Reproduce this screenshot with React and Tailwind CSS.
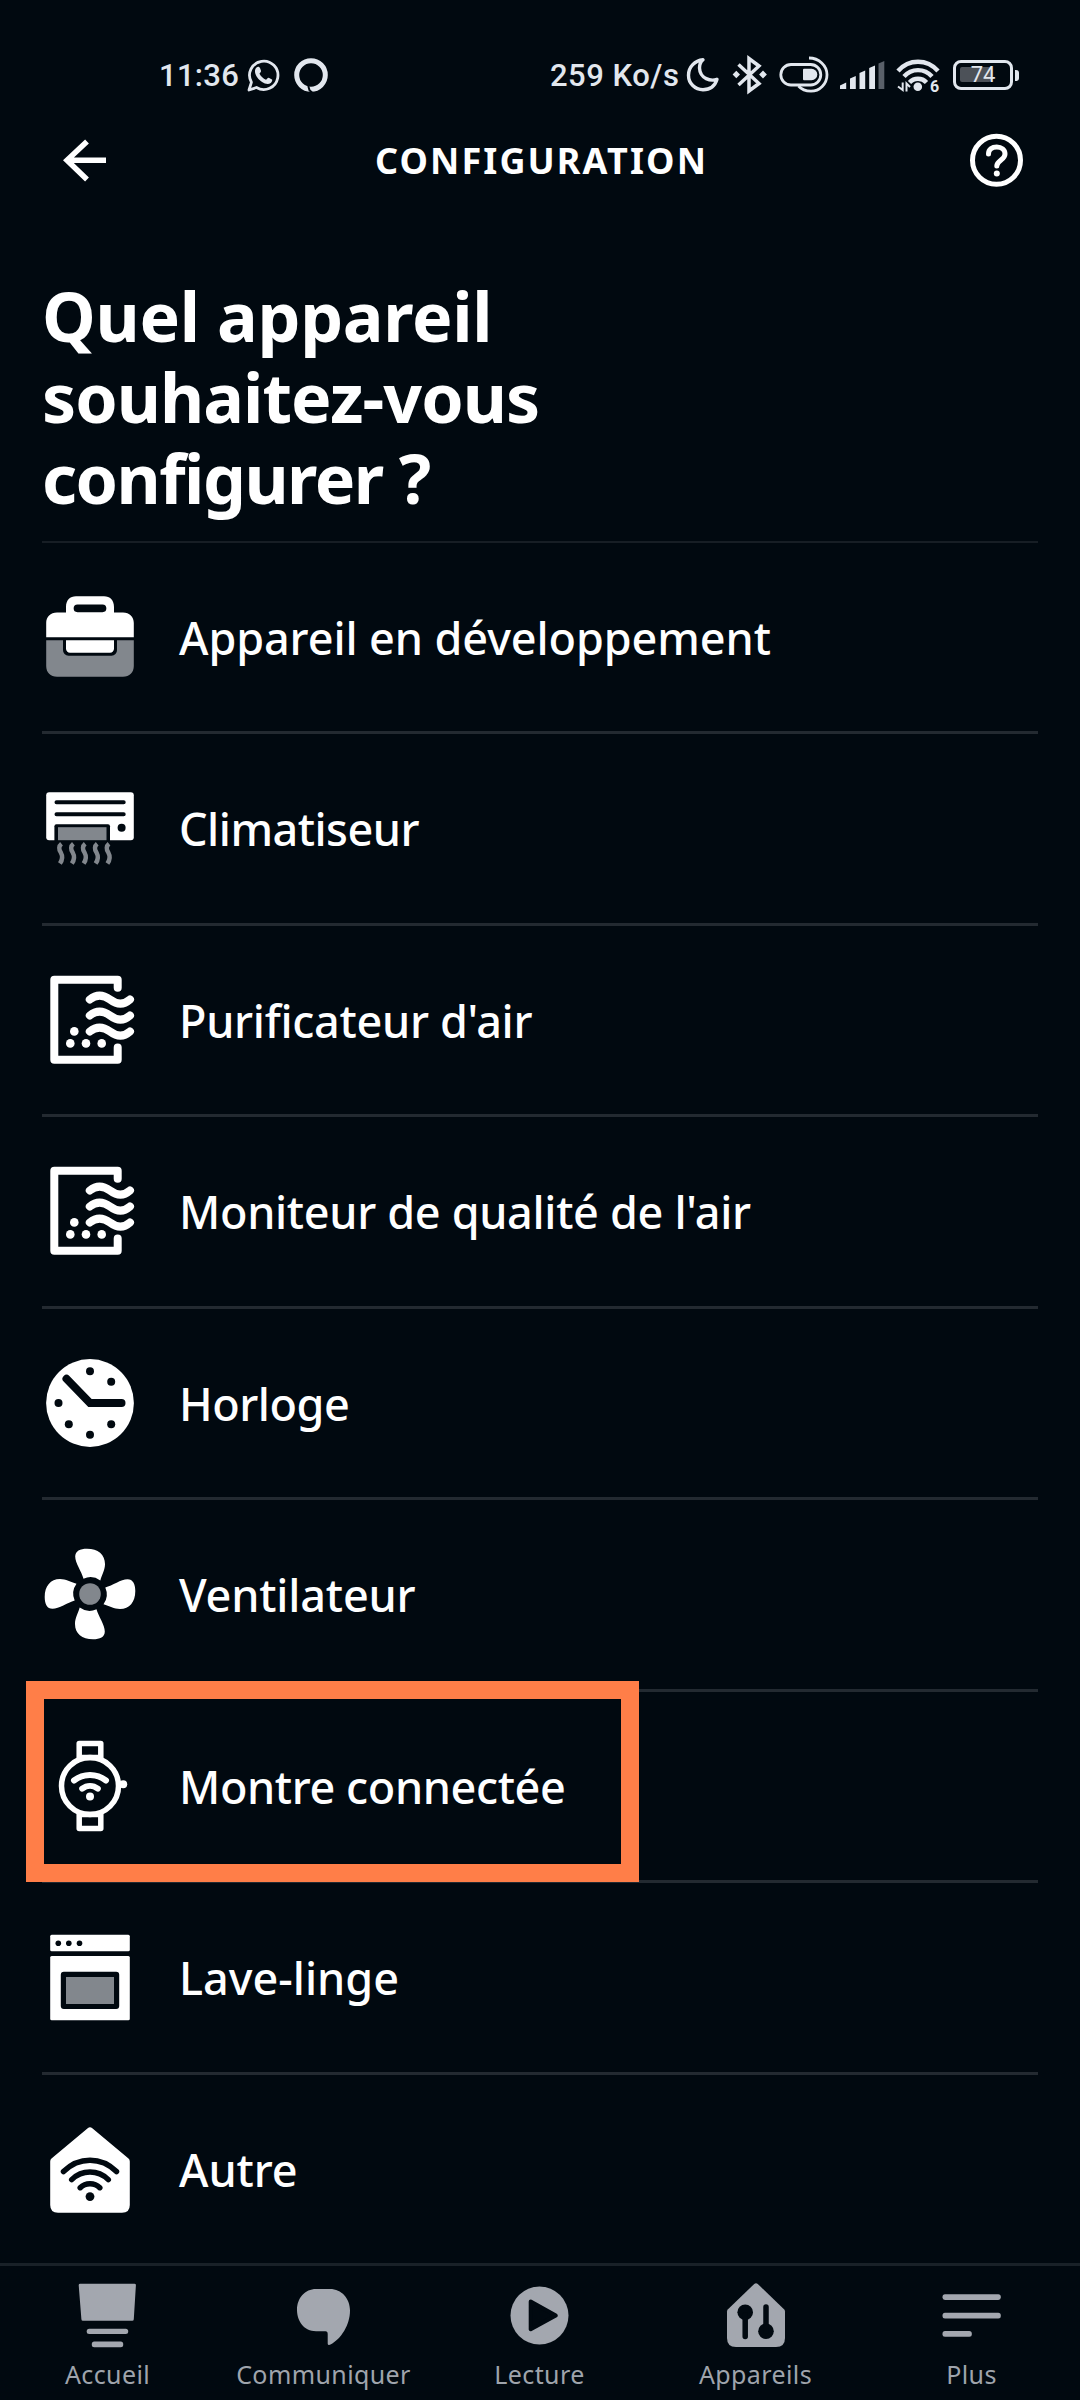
import React from "react";

const BG = "#010910";
const GRAY = "#82878d";

function RowIcon({ children }) {
  return (
    <svg className="h-24 w-24 shrink-0" viewBox="-48 -48 96 96" fill="none">
      {children}
    </svg>
  );
}

function Briefcase() {
  return (
    <RowIcon>
      <path fill="#fff" fillRule="evenodd" d="M-24-24.5V-30C-24-37-20-40.8-14-40.8H14C20-40.8 24-37 24-30V-24.5H33C39.500-24.500 43.800-20 43.800-14V.3H-43.800V-14C-43.800-20-39.500-24.500-33-24.500ZM-12.500-32.500A3.800 3.800 0 0 0-12.500-24.800H12.500A3.800 3.800 0 0 0 12.500-32.500Z" />
      <path fill={GRAY} d="M-43.800 3.200H-27V13A5.500 5.500 0 0 0-21.500 18.700H21.500A5.500 5.500 0 0 0 27 13V3.200H43.800V29C43.800 35.500 39.500 39.700 33 39.700H-33C-39.500 39.700-43.800 35.500-43.800 29Z" />
      <path fill="#fff" d="M-24 3.200H24V11.500A4 4 0 0 1 20 15.700H-20A4 4 0 0 1-24 11.500Z" />
    </RowIcon>
  );
}

function AirConditioner() {
  return (
    <RowIcon>
      <rect x="-43.8" y="-35.8" width="87.600" height="48" rx="3" fill="#fff" />
      <path stroke={BG} strokeWidth="4" strokeLinecap="round" d="M-33.500-25.800H33.700M-33.500-13.800H33.700" />
      <circle cx="31.600" cy="-.2" r="4" fill={BG} />
      <path fill={BG} d="M-35.600 13V-1.800A2 2 0 0 1-33.600-3.800H18A2 2 0 0 1 20 -1.800V13Z" />
      <rect x="-32" y="-.8" width="48.500" height="13" fill={GRAY} />
      {[-29.500, -17.600, -5.800, 6.200, 18].map((x) => (
        <path key={x} transform={`translate(${x} 0)`} stroke={GRAY} strokeWidth="4.500" d="M1 15.800C-1.800 18-1.800 21.500 .3 24.500C2 27.500 2.200 31.500 -.6 35.500" />
      ))}
    </RowIcon>
  );
}

function Purifier() {
  return (
    <RowIcon>
      <path stroke="#fff" strokeWidth="8" strokeLinecap="round" strokeLinejoin="round" d="M27.700-32.300V-40.200H-35.700V39.800H27.700V27.500" />
      {[-16, 0, 16].map((y) => (
        <path key={y} transform={`translate(0 ${y})`} stroke="#fff" strokeWidth="8" strokeLinecap="round" d="M-.2-4.500C6-9.700 13-9.700 20-4.500C27 .8 34 .8 40-4.500" />
      ))}
      <circle cx="-15.700" cy="11.400" r="4.300" fill="#fff" />
      <circle cx="-19.700" cy="23.400" r="4.300" fill="#fff" />
      <circle cx="-4" cy="23.400" r="4.300" fill="#fff" />
      <circle cx="11.700" cy="23.400" r="4.300" fill="#fff" />
    </RowIcon>
  );
}

function ClockIcon() {
  return (
    <RowIcon>
      <circle r="43.900" fill="#fff" />
      <path stroke={BG} strokeWidth="8" strokeLinecap="round" d="M-23.500-24.200L0 0H31.500" />
      {[[0, -31.800], [21.200, -21.200], [21.200, 21.200], [0, 31.800], [-21.200, 21.200], [-31.500, 0]].map(([x, y]) => (
        <circle key={`${x},${y}`} cx={x} cy={y} r="4" fill={BG} />
      ))}
    </RowIcon>
  );
}

function Fan() {
  return (
    <RowIcon>
      <circle r="10.800" fill={GRAY} />
      {[0, 90, 180, 270].map((a) => (
        <path key={a} transform={`rotate(${a})`} fill="#fff" d="M-6.500-15.300C-8.500-22.500-14.800-31-14.800-37.500C-14.800-43-10-45.300-3-45.300C8-45.300 15-39.500 15-30C15-24 12-19.500 10.300-13.500A17 17 0 0 0-6.500-15.300Z" />
      ))}
    </RowIcon>
  );
}

function Watch() {
  return (
    <RowIcon>
      <g stroke="#fff" strokeWidth="5.500" strokeLinecap="round" strokeLinejoin="round">
        <circle r="28.500" />
        <path d="M-10.800-28.500V-42.500H10.800V-28.500ZM-10.800 28.500V42.500H10.800V28.500Z" />
        <path strokeWidth="6" d="M-16-5.500C-6.500-12.800 6.500-12.800 16-5.500M-7.800 2.700C-3-1 3-1 7.800 2.700" />
      </g>
      <circle cx="0" cy="10.500" r="4" fill="#fff" />
      <circle cx="33.200" cy="-1.700" r="4" fill="#fff" />
    </RowIcon>
  );
}

function Washer() {
  return (
    <RowIcon>
      <rect x="-39.800" y="-42.200" width="79.600" height="16.500" rx="1.500" fill="#fff" />
      <rect x="-39.800" y="-21" width="79.600" height="64.200" rx="1.500" fill="#fff" />
      <circle cx="-31.700" cy="-33.800" r="2.800" fill={BG} />
      <circle cx="-21.200" cy="-33.800" r="2.800" fill={BG} />
      <circle cx="-10.500" cy="-33.800" r="2.800" fill={BG} />
      <rect x="-29.200" y="-5.200" width="58.400" height="37.200" rx="3" fill={BG} />
      <rect x="-24" y="0" width="48" height="27" fill={GRAY} />
    </RowIcon>
  );
}

function SmartHome() {
  return (
    <RowIcon>
      <path fill="#fff" d="M-2.300-40.800Q0-42.800 2.300-40.800L38.500-10.500Q39.800-9.300 39.800-7.500V36Q39.800 43.800 32 43.800H-32Q-39.800 43.800-39.800 36V-7.500Q-39.800-9.300-38.500-10.500Z" />
      <path stroke={BG} strokeWidth="5.500" strokeLinecap="round" d="M-26.500 2.500C-11-12.500 11-12.500 26.500 2.500M-18.300 10.600C-8 .5 8 .5 18.300 10.600M-9.800 18.700C-4.500 13.500 4.500 13.500 9.800 18.700" />
      <circle cy="27.600" r="4.400" fill={BG} />
    </RowIcon>
  );
}

const devices = [
  { label: "Appareil en développement", Icon: Briefcase, tracking: "tracking-[-0.1px]" },
  { label: "Climatiseur", Icon: AirConditioner, tracking: "tracking-[-0.5px]" },
  { label: "Purificateur d'air", Icon: Purifier, tracking: "tracking-[-0.3px]" },
  { label: "Moniteur de qualité de l'air", Icon: Purifier, tracking: "tracking-[-0.33px]" },
  { label: "Horloge", Icon: ClockIcon, tracking: "tracking-[-0.45px]" },
  { label: "Ventilateur", Icon: Fan, tracking: "tracking-[-0.18px]" },
  { label: "Montre connectée", Icon: Watch, tracking: "tracking-[-0.4px]", highlighted: true },
  { label: "Lave-linge", Icon: Washer, tracking: "tracking-normal" },
  { label: "Autre", Icon: SmartHome, tracking: "tracking-[-0.1px]" },
];

function StatusBar() {
  return (
    <div className="flex h-[100px] shrink-0 items-center pt-[50px] pl-[159px] font-['Roboto',sans-serif] text-[31px] leading-[50px] font-medium text-[#e2e7ee]">
      <span className="w-[86px] pt-[2px] tracking-[0.3px]">11:36</span>
      <svg className="h-[50px] w-[36px]" viewBox="245 50 36 50" fill="none">
        <path stroke="currentColor" strokeWidth="2.800" strokeLinejoin="round" d="M249 90L251.400 82.300A14.200 14.200 0 1 1 256.500 87.500Z" />
        <path fill="currentColor" d="M256.500 67.500C258 66.300 259.600 66.900 260.200 68.600L261 70.800C261.300 71.800 260 73 259.500 73.800C261 76.600 263.200 78.600 266 79.800C267 79 267.700 77.600 268.700 77.800L272 79.400C272.600 79.800 272 82 270.800 83C267 86 260.500 82 257.500 77.800C255 74.500 253.800 70 256.500 67.500Z" />
      </svg>
      <svg className="ml-[11px] h-[50px] w-[38px]" viewBox="292 50 38 50" fill="none">
        <circle cx="311" cy="75" r="14.300" stroke="currentColor" strokeWidth="5" />
        <path stroke={BG} strokeWidth="2" d="M308.300 86L309.500 90.300L312 92.500" />
      </svg>
      <span className="ml-[220px] w-[135px] pt-[2px] tracking-[0.5px] whitespace-nowrap">259 Ko/s</span>
      <svg className="h-[50px] w-[36px]" viewBox="685 50 36 50" fill="none">
        <path stroke="currentColor" strokeWidth="3.400" strokeLinejoin="round" d="M703 59.800C695 60.500 688.500 67 688.500 75.200C688.500 83.500 695 89.700 703 89.700C710 89.700 715 86 717 79.300C711 81.500 700 79 699.500 68C699.500 64.500 701 61.500 703 59.800Z" />
      </svg>
      <svg className="ml-[10px] h-[50px] w-[38px]" viewBox="731 50 38 50" fill="none">
        <path stroke="currentColor" strokeWidth="3.500" d="M738.500 64.500L759 83.500L749 91V58.500L759 66L738.500 85" />
        <path fill="currentColor" d="M732.600 74.500L736.300 70.800L740 74.500L736.300 78.200ZM759.100 74.500L763 70.600L766.900 74.500L763 78.400Z" />
      </svg>
      <svg className="ml-[8px] h-[50px] w-[54px]" viewBox="777 50 54 50" fill="none">
        <rect x="780.800" y="64.500" width="40" height="20.500" rx="10.200" stroke="currentColor" strokeWidth="2.800" />
        <path fill="currentColor" d="M804 68.700H811.500A5.700 5.700 0 0 1 811.500 80.300H804A1 1 0 0 1 803 79.300V69.700A1 1 0 0 1 804 68.700Z" />
        <path stroke="currentColor" strokeWidth="2.800" d="M809 58C819 58 827 65.500 827 74.700C827 84 819.500 91.200 811 91.200C806 91.200 801.500 89.500 798.500 86" />
      </svg>
      <svg className="ml-[8px] h-[50px] w-[47px]" viewBox="839 50 47 50" fill="none">
        <path fill="currentColor" d="M840 89V85.500L846.200 82.500V89ZM850 89V78.500L855.800 76V89ZM859.500 89V73L865.200 70.500V89ZM869.200 89V68L875 65.500V89Z" />
        <path fill="#596069" d="M878.500 89V63.500L884.300 61V89Z" />
      </svg>
      <svg className="ml-[9px] h-[50px] w-[46px]" viewBox="895 50 46 50" fill="none">
        <path stroke="currentColor" strokeWidth="4.400" d="M898 71C909 58.700 927 58.700 938 71M904 76.500C911.500 68 924.500 68 932 76.500M909.500 82.500C914 77.500 922 77.500 926.500 82.500" />
        <circle cx="917.800" cy="86.800" r="4.300" fill="currentColor" />
        <path stroke="currentColor" strokeWidth="2" d="M902.700 82.500V90L898 86.500M906.500 91.500V83.500L910 87" />
        <text x="930" y="92" fontSize="16" fontWeight="700" fill="currentColor">6</text>
      </svg>
      <div className="relative ml-[12px] flex h-[30px] w-[60px] items-center justify-center rounded-[8px] border-[3.500px] border-[#e2e7ee] text-[22px] leading-none font-normal">
        <div className="absolute top-1 left-1 h-[15px] w-[31px] rounded-[2px] bg-[#4c5158]" />
        <span className="relative">74</span>
      </div>
      <div className="ml-[2px] h-[11px] w-[4px] rounded-r-[3px] bg-[#e2e7ee]" />
    </div>
  );
}

function Header() {
  return (
    <header className="flex h-[120px] shrink-0 items-center justify-between pr-[53px] pl-[60px]">
      <svg className="h-[50px] w-[50px]" viewBox="60 135 50 50" fill="none" stroke="#fff" strokeWidth="5.500">
        <path d="M106 160.300H67M87 141.500L67 160.300L87 179.500" />
      </svg>
      <h1 className="translate-x-[3px] pt-[2px] text-[36px] leading-none font-bold tracking-[2.100px]">CONFIGURATION</h1>
      <svg className="h-[60px] w-[60px]" viewBox="967 130 60 60" fill="none" stroke="#fff">
        <circle cx="996.500" cy="160.300" r="24" strokeWidth="5" />
        <path strokeWidth="5" strokeLinecap="round" strokeLinejoin="round" d="M988.500 154C988.500 149.500 992 147 996.800 147C1001.500 147 1005 149.800 1005 154C1005 160 996.800 160.500 996.800 166" />
        <circle cx="996.800" cy="173.500" r="3" fill="#fff" stroke="none" />
      </svg>
    </header>
  );
}

function NavIcon({ children }) {
  return (
    <svg className="h-[72px] w-[72px]" viewBox="-36 -36 72 72" fill="#a3a7af">
      {children}
    </svg>
  );
}

const tabs = [
  {
    label: "Accueil",
    icon: (
      <>
        <path d="M-27.900-31.300H26.500Q28-31.300 27.900-29.800L25.800 4.200Q25.700 5.700 24.200 5.700H-25Q-26.500 5.700-26.600 4.200L-29.300-29.800Q-29.400-31.300-27.900-31.300Z" />
        <rect x="-21.300" y="13.700" width="41.500" height="5.400" rx="2.500" />
        <rect x="-16.200" y="26.600" width="31.400" height="5.600" rx="2.500" />
      </>
    ),
  },
  {
    label: "Communiquer",
    icon: <path d="M-8-26H6C17.500-26 26-16.500 26-4.500C26 10 17 24 6.500 29.600C5 30.400 3.700 30 3.700 28.500V19C3.700 17 3 16.200 1.500 16.200H-8C-20 16.200-27 6-27-5C-27-17-19-26-8-26Z" />,
  },
  {
    label: "Lecture",
    icon: (
      <>
        <circle cx="-.5" cy=".5" r="29" />
        <path fill={BG} stroke={BG} strokeWidth="4" strokeLinejoin="round" d="M-9.300-13.500L15.800.5L-9.300 14.200Z" />
      </>
    ),
  },
  {
    label: "Appareils",
    icon: (
      <>
        <path d="M-1.800-31Q0-32.300 1.800-31L28-5.800Q29-4.800 29-3.500V23Q29 32 20 32H-20Q-29 32-29 23V-3.500Q-29-4.800-28-5.800Z" />
        <circle cx="-10.800" cy="-2.800" r="7.800" fill={BG} />
        <circle cx="10" cy="16.300" r="7.800" fill={BG} />
        <path stroke={BG} strokeWidth="5.500" strokeLinecap="round" d="M-10.800 0V21.500M10-8V16" />
      </>
    ),
  },
  {
    label: "Plus",
    icon: (
      <>
        <rect x="-29.500" y="-20.700" width="58.300" height="5.700" rx="2.500" />
        <rect x="-29.500" y="-2.300" width="58.300" height="5.700" rx="2.500" />
        <rect x="-29.500" y="16" width="29.300" height="5.700" rx="2.500" />
      </>
    ),
  },
];

export default function App() {
  return (
    <div className="flex h-[2400px] w-[1080px] flex-col overflow-hidden bg-[#010910] font-['Noto_Sans',sans-serif] text-white">
      <StatusBar />
      <Header />
      <main className="min-h-0 flex-1">
        <h2 className="h-[320.500px] pt-[55px] pl-[42px] text-[68px] leading-[81px] font-bold">
          <span className="block tracking-[-0.300px]">Quel appareil</span>
          <span className="block tracking-[-0.950px]">souhaitez-vous</span>
          <span className="block tracking-[-1.500px]">configurer ?</span>
        </h2>
        <ul className="ml-[42px] w-[996px] border-t-2 border-[#171e25]">
          {devices.map(({ label, Icon, tracking, highlighted }) => (
            <li key={label} className="relative flex h-[191.500px] items-center border-b-[3px] border-[#232a31] last:border-transparent">
              <div className="-ml-[0.500px]">
                <Icon />
              </div>
              <span className={`ml-[41.500px] pt-px text-[45px] font-medium ${tracking}`}>{label}</span>
              {highlighted && (
                <div className="absolute -top-[11px] -left-[16px] h-[201px] w-[613px] border-[18px] border-[#ff7e48]" />
              )}
            </li>
          ))}
        </ul>
      </main>
      <nav className="relative flex h-[137px] shrink-0 border-t-[3px] border-[#192128] bg-[#010910]">
        {tabs.map(({ label, icon }) => (
          <div key={label} className="flex flex-1 flex-col items-center pt-[13px]">
            <NavIcon>{icon}</NavIcon>
            <span className="mt-[6px] mr-px text-[25px] leading-[34px] tracking-[0.400px] text-[#9fa4ac]">{label}</span>
          </div>
        ))}
      </nav>
    </div>
  );
}
